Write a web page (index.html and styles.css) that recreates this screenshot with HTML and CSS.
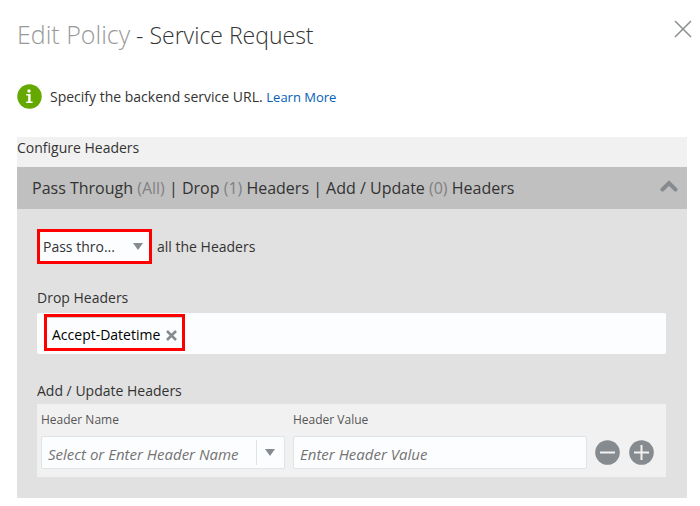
FILE: index.html
```html
<!DOCTYPE html>
<html lang="en">
<head>
    <meta charset="UTF-8">
    <meta name="viewport" content="width=device-width, initial-scale=1.0">
    <title>Edit Policy - Service Request</title>
    <link rel="stylesheet" href="styles.css">
</head>
<body>

    <header class="dialog-header">
        <h1><span class="muted">Edit Policy</span> - Service Request</h1>
        <button type="button" class="icon-button" aria-label="Close">
            <svg width="18" height="18" viewBox="0 0 18 18"><path d="M1 1L17 17M17 1L1 17" stroke="#8a8d90" stroke-width="1.5" fill="none"/></svg>
        </button>
    </header>

    <div class="info">
        <svg width="25" height="25" viewBox="0 0 25 25">
            <circle cx="12.5" cy="12.5" r="12.2" fill="#64a800"/>
            <circle cx="12" cy="7" r="1.7" fill="#fff"/>
            <path d="M9.2 10H13.6V17.4H15.6V19H9.2V17.4H11.2V11.6H9.2Z" fill="#fff"/>
        </svg>
        <p>Specify the backend service URL. <a href="#">Learn More</a></p>
    </div>

    <main class="panel">
        <h2>Configure Headers</h2>

        <div class="summary">
            <div class="summary-text">Pass Through <span>(All)</span> | Drop <span>(1)</span> Headers | Add / Update <span>(0)</span> Headers</div>
            <button type="button" class="icon-button" aria-label="Collapse">
                <svg width="18" height="12" viewBox="0 0 18 12"><path d="M2.5 9.5L9 3L15.5 9.5" stroke="#868b8f" stroke-width="4" stroke-linecap="round" fill="none"/></svg>
            </button>
        </div>

        <form class="settings">
            <div class="pass-row">
                <div class="select-wrap">
                    <select id="passMode">
                        <option>Pass thro...</option>
                        <option>Drop</option>
                    </select>
                    <svg class="select-arrow" width="10" height="7" viewBox="0 0 10 7"><path d="M0 0H10L5 7Z" fill="#868b8f"/></svg>
                </div>
                <label for="passMode">all the Headers</label>
            </div>

            <label class="section-label" for="dropHeaders">Drop Headers</label>
            <div class="tag-box">
                <div class="tag">
                    <span>Accept-Datetime</span>
                    <button type="button" class="icon-button" aria-label="Remove Accept-Datetime">
                        <svg width="11" height="11" viewBox="0 0 11 11"><path d="M1 1L10 10M10 1L1 10" stroke="#868b8f" stroke-width="2.6" fill="none"/></svg>
                    </button>
                </div>
                <input type="text" id="dropHeaders">
            </div>

            <h3 class="section-label update-label">Add / Update Headers</h3>
            <div class="update-box">
                <div class="field name-field">
                    <label for="headerName">Header Name</label>
                    <div class="combo">
                        <input type="text" id="headerName" placeholder="Select or Enter Header Name">
                        <button type="button" class="icon-button combo-button" aria-label="Show header names">
                            <svg width="10" height="7" viewBox="0 0 10 7"><path d="M0 0H10L5 7Z" fill="#868b8f"/></svg>
                        </button>
                    </div>
                </div>
                <div class="field value-field">
                    <label for="headerValue">Header Value</label>
                    <div class="combo">
                        <input type="text" id="headerValue" placeholder="Enter Header Value">
                    </div>
                </div>
                <div class="row-actions">
                    <button type="button" class="icon-button" aria-label="Remove header">
                        <svg width="25" height="25" viewBox="0 0 25 25"><circle cx="12.5" cy="12.5" r="12.3" fill="#868b8f"/><path d="M5 12.5H20" stroke="#f2f2f2" stroke-width="2"/></svg>
                    </button>
                    <button type="button" class="icon-button" aria-label="Add header">
                        <svg width="25" height="25" viewBox="0 0 25 25"><circle cx="12.5" cy="12.5" r="12.3" fill="#868b8f"/><path d="M5 12.5H20M12.5 5V20" stroke="#f2f2f2" stroke-width="2"/></svg>
                    </button>
                </div>
            </div>
        </form>
    </main>

</body>
</html>
```
FILE: styles.css
```css
* {
    box-sizing: border-box;
}
body {
    margin: 0;
    padding: 14px 13px 8px 17px;
    background-color: #fff;
    color: #333;
    font-family: "Segoe UI", "Open Sans", sans-serif;
    font-size: 14px;
    line-height: 20px;
}
h1, h2, h3, p {
    margin: 0;
    font-size: 14px;
    font-weight: 400;
}
input, select {
    border: none;
    background: none;
    color: #333;
    font: inherit;
    outline: none;
}
.icon-button {
    display: flex;
    flex: none;
    padding: 0;
    border: none;
    background: none;
    cursor: pointer;
}
.dialog-header {
    display: flex;
    justify-content: space-between;
    height: 40px;
    margin-right: -5px;
}
.dialog-header h1 {
    font-size: 23px;
    font-weight: 300;
    line-height: 40px;
}
.dialog-header .icon-button {
    align-self: flex-start;
    padding-top: 6px;
}
.dialog-header .muted {
    color: #999;
    font-size: 25px;
}
.info {
    display: flex;
    align-items: center;
    gap: 8px;
    margin: 30px 0 28px;
}
.info p {
    line-height: 24px;
}
.info a {
    color: #0560b6;
    font-size: 13px;
    text-decoration: none;
}
.panel {
    background-color: #e1e1e1;
}
.panel h2 {
    padding: 1px 0 9px;
    background-color: #f1f1f1;
}
.summary {
    display: flex;
    align-items: center;
    justify-content: space-between;
    height: 42px;
    padding: 0 9px 0 15px;
    background-color: #c0c0c0;
    font-size: 16px;
}
.summary span {
    color: #808080;
}
.summary .icon-button {
    padding-bottom: 4px;
}
.settings {
    padding: 20px 21px 21px 20px;
}
.pass-row {
    display: flex;
    align-items: center;
    gap: 5px;
}
.select-wrap {
    position: relative;
    width: 115px;
    height: 35px;
    border: 3px solid #f00;
    background-color: #fcfdfe;
}
.select-wrap select {
    width: 100%;
    height: 100%;
    padding: 0 3px;
    appearance: none;
}
.select-arrow {
    position: absolute;
    top: 11px;
    right: 6px;
    pointer-events: none;
}
.section-label {
    display: block;
    margin-top: 24px;
}
.tag-box {
    display: flex;
    height: 41px;
    margin-top: 5px;
    padding: 1px 7px;
    border-radius: 2px;
    background-color: #fcfdfe;
}
.tag {
    display: flex;
    align-items: center;
    gap: 6px;
    height: 37px;
    padding: 5px 5px 0;
    border: 3px solid #f00;
    box-shadow: inset 0 1px 0 #c8ced2;
    color: #000;
}
.tag-box input {
    flex: 1;
    min-width: 0;
}
.update-label {
    margin-top: 27px;
}
.update-box {
    display: flex;
    gap: 8px;
    margin-top: 3px;
    padding: 6px 12px 8px 4px;
    background-color: #f1f1f1;
}
.field {
    min-width: 0;
}
.name-field {
    flex: 244;
}
.value-field {
    flex: 294;
}
.field label {
    display: block;
    margin-bottom: 6px;
    color: #555;
    font-size: 12px;
}
.combo {
    display: flex;
    align-items: center;
    height: 33px;
    border: 1px solid #dfe4e7;
    border-radius: 2px;
    background-color: #fcfdfe;
}
.combo input {
    flex: 1;
    min-width: 0;
    padding: 2px 6px 0;
    font-size: 15px;
}
.combo input::placeholder {
    color: #737373;
    font-style: italic;
    opacity: 1;
}
.combo-button {
    align-items: center;
    height: 25px;
    padding: 0 9px 0 8px;
    border-left: 1px solid #dfe4e7;
}
.row-actions {
    display: flex;
    align-items: flex-end;
    gap: 9px;
    padding-bottom: 4px;
}
```
